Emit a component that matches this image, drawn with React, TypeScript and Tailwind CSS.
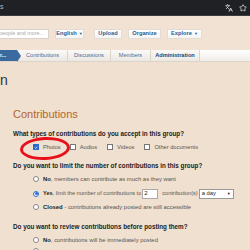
import { Languages, Star } from "lucide-react";

function HeadButton({ label, caret, className }: { label: string; caret?: boolean; className?: string }) {
  return (
    <div
      className={`h-[10px] flex items-center justify-center gap-[2px] bg-gradient-to-b from-white to-[#f4f4f4] border border-[#e2dcd4] text-[5.7px] font-bold text-[#2c5a93] ${className ?? ""}`}
    >
      {label}
      {caret && <span className="text-[4px]">▼</span>}
    </div>
  );
}

function Check({ checked, label, className }: { checked?: boolean; label: string; className?: string }) {
  return (
    <div className={`flex items-center ${className ?? ""}`}>
      <span
        className={`w-[6px] h-[6px] border flex items-center justify-center ${
          checked ? "bg-[#2a6bd1] border-[#2a6bd1]" : "bg-white border-[#777]"
        }`}
      >
        {checked && (
          <svg viewBox="0 0 10 10" className="w-[5px] h-[5px]">
            <path d="M2 5.2 L4.2 7.4 L8 2.8" stroke="white" strokeWidth="1.8" fill="none" />
          </svg>
        )}
      </span>
      <span className="ml-[4px] text-[5.7px] text-[#555]">{label}</span>
    </div>
  );
}

function Radio({ checked, children, className }: { checked?: boolean; children?: React.ReactNode; className?: string }) {
  return (
    <div className={`flex items-center ml-[33px] ${className ?? ""}`}>
      <span
        className={`w-[6px] h-[6px] rounded-full border flex items-center justify-center bg-white ${
          checked ? "border-[#2a6bd1]" : "border-[#888]"
        }`}
      >
        {checked && <span className="w-[3px] h-[3px] rounded-full bg-[#2a6bd1]" />}
      </span>
      {children && (
        <div className="ml-[4px] text-[5.9px] text-[#555] flex items-center whitespace-nowrap">{children}</div>
      )}
    </div>
  );
}

export default function App() {
  return (
    <div className="relative w-[250px] h-[250px] overflow-hidden bg-[#f0e0cf] font-['Liberation_Sans',Arial,sans-serif]">
      {/* browser bar */}
      <div className="h-[16px] bg-[#202124] border-b border-[#3c3c3c] flex items-center justify-between pr-[3px]">
        <span className="text-[7px] text-[#bbb]">s</span>
        <div className="flex items-center gap-[6px] text-[#e8e8e8]">
          <Languages className="w-[8px] h-[8px]" strokeWidth={2.2} />
          <Star className="w-[8px] h-[8px]" strokeWidth={2.2} />
        </div>
      </div>

      {/* site header */}
      <div className="h-[34px] bg-[#f2e2d3] flex items-center pt-[1px]">
        <div className="w-[49px] h-[10px] bg-white border border-l-0 border-[#d8d2ca] flex items-center justify-end pr-[4px] overflow-hidden whitespace-nowrap text-[5.4px] text-[#aaa]">
          people and more...
        </div>
        <HeadButton label="English" caret className="ml-[6px] w-[29px]" />
        <HeadButton label="Upload" className="ml-[10px] w-[28px]" />
        <HeadButton label="Organize" className="ml-[6px] w-[33px]" />
        <HeadButton label="Explore" caret className="ml-[6px] w-[35px]" />
      </div>

      {/* tabs */}
      <div className="h-[12px] flex items-stretch bg-gradient-to-b from-[#fbfaf8] to-[#ece7e1] border-b border-[#ddd5cc]">
        <div className="relative w-[17px] bg-[#3a6a9f] flex items-center text-[5.4px] font-bold text-white">
          r...
          <span className="absolute right-[-4px] top-0 w-0 h-0 border-y-[6px] border-y-transparent border-l-[4px] border-l-[#3a6a9f]" />
        </div>
        <div className="w-[51px] pl-[9px] flex items-center text-[5.6px] text-[#4a6d96] border-r border-[#ddd5cc]">Contributions</div>
        <div className="w-[43px] flex items-center justify-center text-[5.6px] text-[#4a6d96] border-r border-[#ddd5cc]">Discussions</div>
        <div className="w-[40px] flex items-center justify-center text-[5.6px] text-[#4a6d96] border-r border-[#ddd5cc]">Members</div>
        <div className="w-[49px] flex items-center justify-center text-[5.6px] font-bold text-[#24416a] border-r border-[#ddd5cc]">Administration</div>
        <div className="flex-1 bg-gradient-to-b from-white to-[#f1ede8]" />
      </div>

      {/* content */}
      <div className="text-[#222]">
        <div className="mt-[8px] text-[14px] leading-[20px] text-[#333]">n</div>
        <div className="mt-[17px] ml-[13px] text-[11px] leading-[14px] text-[#b5652e]">Contributions</div>

        <div className="mt-[9px] ml-[13px] text-[6.3px] font-bold leading-[8px]">
          What types of contributions do you accept in this group?
        </div>
        <div className="mt-[5px] ml-[33px] flex items-center h-[8px]">
          <Check checked label="Photos" />
          <Check label="Audios" className="ml-[9px]" />
          <Check label="Videos" className="ml-[10px]" />
          <Check label="Other documents" className="ml-[10px]" />
        </div>

        <div className="mt-[11px] ml-[13px] text-[6.3px] font-bold leading-[8px]">
          Do you want to limit the number of contributions in this group?
        </div>
        <Radio className="mt-[5px] h-[8px]">
          <b className="text-[#222]">No</b>, members can contribute as much as they want
        </Radio>
        <Radio checked className="mt-[5px] h-[11px]">
          <span className="text-[5.6px]">
            <b className="text-[#222]">Yes</b>, limit the number of contributions to
          </span>
          <span className="ml-[1px] w-[16px] h-[10px] bg-white border border-[#aaa] flex items-center pl-[1px] text-[6px] text-[#222]">2</span>
          <span className="ml-[4px] text-[5.6px]">contribution(s)</span>
          <span className="ml-[1px] w-[35px] h-[10px] bg-white border border-[#999] flex items-center justify-between px-[2px] text-[5.8px] text-[#222]">
            a day <span className="text-[4px]">▼</span>
          </span>
        </Radio>
        <Radio className="mt-[4px] h-[8px]">
          <b className="text-[#222]">Closed</b>&nbsp;- contributions already posted are still accessible
        </Radio>

        <div className="mt-[12px] ml-[13px] text-[6.3px] font-bold leading-[8px]">
          Do you want to review contributions before posting them?
        </div>
        <Radio className="mt-[5px] h-[8px]">
          <b className="text-[#222]">No</b>, contributions will be immediately posted
        </Radio>
        <Radio className="mt-[3px] h-[8px]" />
      </div>

      {/* red annotation */}
      <div className="absolute left-[20px] top-[137px] w-[50px] h-[23px] rounded-[50%] border-[3px] border-[#e8101a] -rotate-3" />
    </div>
  );
}
